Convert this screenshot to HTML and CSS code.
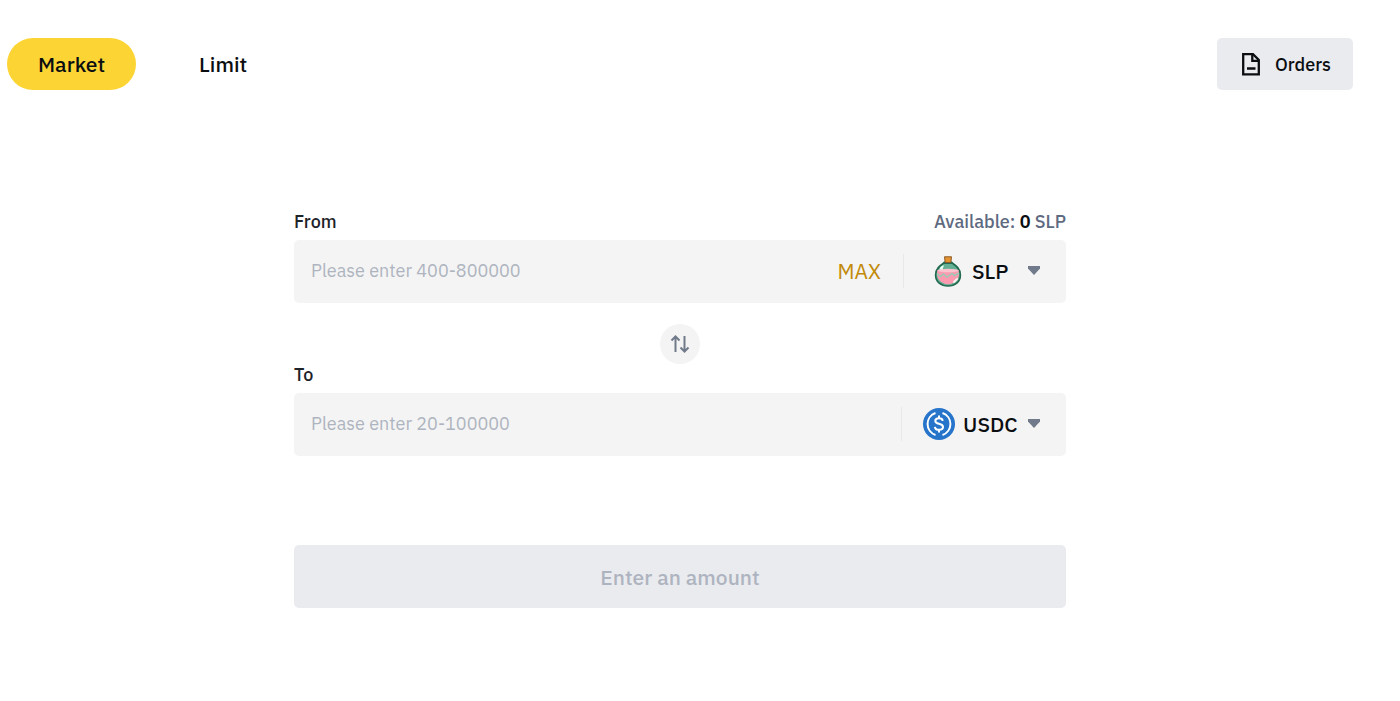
FILE: index.html
```html
<!DOCTYPE html>
<html lang="en">

<head>
    <meta charset="utf-8">
    <title>Convert</title>
    <link rel="stylesheet" href="styles.css">
</head>

<body>
    <header class="top-bar">
        <nav class="tabs">
            <button type="button" class="tab active">Market</button>
            <button type="button" class="tab">Limit</button>
        </nav>
        <button type="button" class="orders-button">
            <svg width="18" height="23" viewBox="0 0 18 23" fill="none" stroke="#0b0e11" stroke-width="2.3">
                <path d="M1.2 1.2H11L16.8 7V21.3H1.2Z" />
                <path d="M10.3 1.5V7.8H16.6M5 15.5H13.5" />
            </svg>
            Orders
        </button>
    </header>

    <form class="convert">
        <div class="field-head">
            <label for="from">From</label>
            <span class="available">Available: <b>0</b> SLP</span>
        </div>
        <div class="field">
            <input type="text" id="from" class="amount" placeholder="Please enter 400-800000">
            <button type="button" class="max-button">MAX</button>
            <div class="coin coin-slp">
                <svg class="coin-icon" width="32" height="32" viewBox="0 0 32 32">
                    <path d="M12.500 7.500C9 10 3.600 13 3.600 20C3.600 27 9 31 16 31S28.400 27 28.400 20C28.400 13 23 10 19.500 7.500Z" fill="#63b094" stroke="#23694f" stroke-width="1.600" />
                    <path d="M5.500 15H26.500C29 23 23 29.200 16 29.200S3 23 5.500 15Z" fill="#fc9bb0" />
                    <ellipse cx="16" cy="15.500" rx="10.500" ry="1.800" fill="#fcc4cf" />
                    <path d="M5 18.500L8.500 21.500L11.500 19L15 22L20 18.500L22.500 20.500L27 18" fill="none" stroke="#9cc9b6" stroke-width="1.500" />
                    <path d="M7.500 14.500C8 12 9.500 10.800 12 10.300L10.500 14.500Z" fill="#e8fff6" />
                    <path d="M22 27L25 24" stroke="#fff0f2" stroke-width="2" stroke-linecap="round" />
                    <rect x="11.500" y="6.500" width="9" height="2.500" rx="1" fill="#286b54" />
                    <path d="M12.500 1.800H19.500L18.800 7.500H13.200Z" fill="#e69431" stroke="#8d5b25" />
                </svg>
                <select class="coin-select" aria-label="From coin">
                    <option>SLP</option>
                </select>
                <svg class="caret" width="12" height="9" viewBox="0 0 12 9" fill="#707a8a">
                    <path d="M0 0H12V2.500L6 9L0 2.500Z" />
                </svg>
            </div>
        </div>

        <button type="button" class="swap-button" aria-label="Swap coins">
            <svg width="20" height="20" viewBox="0 0 20 20" fill="none" stroke="#707a8a" stroke-width="2">
                <path d="M5.500 18V2.500M1.500 6.500L5.500 2.500L9.500 6.500" />
                <path d="M14.500 2V17.500M10.500 13.500L14.500 17.500L18.500 13.500" />
            </svg>
        </button>

        <div class="field-head">
            <label for="to">To</label>
        </div>
        <div class="field">
            <input type="text" id="to" class="amount" placeholder="Please enter 20-100000">
            <div class="coin coin-usdc">
                <svg class="coin-icon" width="32" height="32" viewBox="0 0 32 32" fill="none" stroke="#fff" stroke-width="2">
                    <circle cx="16" cy="16" r="16" fill="#2775ca" stroke="none" />
                    <path d="M12.500 5A11.600 11.600 0 0 0 12.500 27M19.500 5A11.600 11.600 0 0 1 19.500 27" />
                    <path d="M19.800 12.800C19.500 11 18 10.300 16 10.300C13.800 10.300 12.300 11.300 12.300 13C12.300 17 20 14.500 20 19C20 20.800 18.300 21.800 16 21.800C13.600 21.800 12.100 20.800 11.900 18.800M16 7.500V10.500M16 21.500V24.500" />
                </svg>
                <select class="coin-select" aria-label="To coin">
                    <option>USDC</option>
                </select>
                <svg class="caret" width="12" height="9" viewBox="0 0 12 9" fill="#707a8a">
                    <path d="M0 0H12V2.500L6 9L0 2.500Z" />
                </svg>
            </div>
        </div>

        <button type="submit" class="submit-button" disabled>Enter an amount</button>
    </form>
</body>

</html>
```

FILE: styles.css
```css
* {
    box-sizing: border-box;
}

body {
    margin: 0;
    padding: 38px 47px 38px 7px;
    background-color: #fff;
    color: #0b0e11;
    font-family: "IBM Plex Sans", Roboto, "Liberation Sans", sans-serif;
    font-size: 18px;
    font-weight: 500;
}

button,
input,
select {
    margin: 0;
    padding: 0;
    border: none;
    background: none;
    color: inherit;
    font: inherit;
}

svg {
    flex: none;
}

.top-bar,
.tabs,
.orders-button,
.field-head,
.field,
.coin {
    display: flex;
    align-items: center;
}

.top-bar,
.field-head {
    justify-content: space-between;
}

.tabs {
    gap: 32px;
}

.tab {
    height: 52px;
    padding: 0 31px;
    border-radius: 26px;
    font-size: 21px;
}

.active {
    background-color: #fcd535;
}

.orders-button {
    height: 52px;
    padding: 0 22px 0 25px;
    gap: 15px;
    border-radius: 5px;
    background-color: #eaebef;
}

.convert {
    max-width: 772px;
    margin: 121px auto 0;
}

.field-head {
    margin-bottom: 8px;
    line-height: 21px;
    color: #1e2329;
}

.available {
    color: #5e6a80;
}

.available b {
    color: #0b0e11;
    font-weight: 600;
}

.field {
    height: 63px;
    padding: 0 26px 2px 17px;
    border-radius: 5px;
    background-color: #f4f4f4;
}

.amount {
    flex: 1;
    min-width: 0;
    font-weight: 400;
}

.amount::placeholder {
    color: #aeb4bf;
    opacity: 1;
}

.max-button {
    margin-right: 22px;
    color: #c28a09;
    font-size: 21px;
    font-weight: 400;
}

.coin {
    height: 34px;
    border-left: 1px solid #e6e8ea;
    font-size: 21px;
}

.coin-slp {
    padding-left: 28px;
}

.coin-usdc {
    padding-left: 21px;
}

.coin-icon {
    margin-right: 8px;
}

.coin-select {
    appearance: none;
}

.coin-slp .coin-select {
    width: 56px;
}

.coin-usdc .coin-select {
    width: 65px;
}

.swap-button {
    display: flex;
    align-items: center;
    justify-content: center;
    width: 40px;
    height: 40px;
    margin: 21px auto 0;
    border-radius: 50%;
    background-color: #f4f4f4;
}

.submit-button {
    display: block;
    width: 100%;
    height: 63px;
    margin-top: 89px;
    border-radius: 5px;
    background-color: #eaebef;
    color: #aeb4bf;
    font-size: 21px;
    font-weight: 500;
}
```
